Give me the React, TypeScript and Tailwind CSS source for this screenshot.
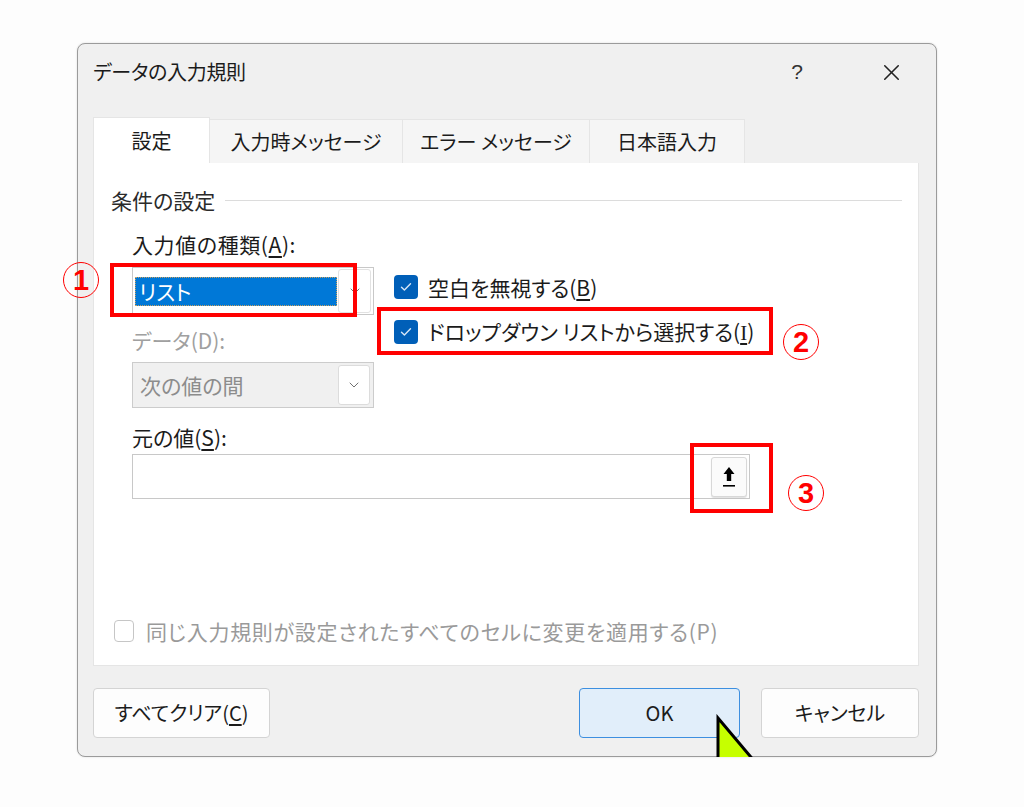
import { ChevronDown, X } from "lucide-react";

const jp = "font-['Noto_Sans_CJK_JP',sans-serif] [font-feature-settings:'palt']";

function CheckedBox() {
  return (
    <span className="flex h-[24px] w-[24px] shrink-0 items-center justify-center rounded-[4px] bg-[#005fb8]">
      <svg width="12" height="10" viewBox="0 0 12 10" fill="none">
        <path d="M1.5 5.2 4.4 8 10.5 1.8" stroke="#d7e6f7" strokeWidth="1.4" strokeLinecap="round" strokeLinejoin="round" />
      </svg>
    </span>
  );
}

function UploadIcon() {
  return (
    <svg width="14" height="22" viewBox="0 0 14 22">
      <path d="M7 1 1.5 8h3.3v7h4.4V8h3.3z" fill="#000" />
      <rect x="1" y="19" width="12" height="1.6" fill="#000" />
    </svg>
  );
}

function Circled({ n, className }: { n: string; className: string }) {
  return (
    <div className={`absolute flex h-[36px] w-[36px] items-center justify-center rounded-full border-[1.5px] border-[#ff0000] ${className}`}>
      <span className="font-['Liberation_Sans',sans-serif] text-[29px] font-bold leading-none text-[#ff0000]">{n}</span>
    </div>
  );
}

export default function App() {
  return (
    <div className={`relative h-[807px] w-[1024px] overflow-hidden bg-[#fdfdfd] pl-[77px] pt-[43px] text-[#1b1b1b] ${jp}`}>
      <div className="flex h-[714px] w-[860px] flex-col rounded-[8px] border border-[#9b9b9b] bg-[#f0f0f0] pl-[15px] pr-[17px] shadow-[0_0_2px_rgba(0,0,0,0.15)]">
        {/* title bar */}
        <div className="flex h-[56px] items-center justify-between">
          <span className="text-[20px] leading-[28px] tracking-[-0.3px]">データの入力規則</span>
          <div className="mr-[5px] flex items-center gap-[48px]">
            <span className="flex w-[46px] justify-center font-['Liberation_Sans',sans-serif] text-[21px] font-light text-[#333]">?</span>
            <span className="flex w-[46px] justify-center">
              <X size={27} strokeWidth={1.4} color="#222" />
            </span>
          </div>
        </div>

        {/* tabs */}
        <div className="mt-[17px] flex h-[46px] items-end text-[20px] leading-[28px]">
          <div className="flex h-[46px] w-[117px] items-center justify-center border border-b-0 border-[#e5e5e5] bg-white">設定</div>
          <div className="flex h-[44px] w-[193px] items-center justify-center border-r border-t border-[#e5e5e5] bg-[#f5f5f5]">入力時メッセージ</div>
          <div className="flex h-[44px] w-[187px] items-center justify-center border-r border-t border-[#e5e5e5] bg-[#f5f5f5]">エラー メッセージ</div>
          <div className="flex h-[44px] w-[155px] items-center justify-center border-r border-t border-[#e5e5e5] bg-[#f5f5f5]">日本語入力</div>
        </div>

        {/* panel */}
        <div className="flex h-[503px] flex-col border border-t-0 border-[#e5e5e5] bg-white text-[21px] leading-[30px]">
          <div className="flex items-center pl-[17px] pr-[16px] pt-[22px]">
            <span className="text-[#2a2a2a]">条件の設定</span>
            <div className="ml-[10px] h-px flex-1 bg-[#dcdcdc]" />
          </div>

          <div className="pl-[38px]">
            <div className="flex">
              <div className="flex w-[242px] flex-col">
                <div className="mt-[14px] tracking-[0.6px]">
                  入力値の種類(<span className="underline underline-offset-[3px]">A</span>):
                </div>
                <div className="mt-[8px] flex h-[48px] items-center border border-[#c8c8c8] pl-[2px] pr-[2px]">
                  <div className="flex h-[29px] flex-1 items-center border border-dotted border-[#c9a060] bg-[#0078d7] pl-[3px] text-white">リスト</div>
                  <div className="ml-[1px] flex h-[44px] w-[33px] items-center justify-center rounded-[3px] border border-[#e2e2e2] bg-white">
                    <ChevronDown size={16} strokeWidth={1.4} color="#666" />
                  </div>
                </div>
                <div className="mt-[10px] text-[#a0a0a0]">データ(D):</div>
                <div className="mt-[7px] flex h-[46px] items-center border border-[#cccccc] bg-[#f0f0f0] pl-[7px] pr-[3px]">
                  <span className="flex-1 text-[#8c8c8c]">次の値の間</span>
                  <div className="flex h-[40px] w-[32px] items-center justify-center rounded-[3px] border border-[#dcdcdc] bg-white">
                    <ChevronDown size={16} strokeWidth={1.4} color="#666" />
                  </div>
                </div>
              </div>

              <div className="ml-[20px] flex flex-col pt-[59px]">
                <label className="flex h-[26px] items-center gap-[10px]">
                  <CheckedBox />
                  <span>
                    空白を無視する(<span className="underline underline-offset-[3px]">B</span>)
                  </span>
                </label>
                <label className="mt-[19px] flex h-[26px] items-center gap-[10px]">
                  <CheckedBox />
                  <span>
                    ドロップダウン リストから選択する(<span className="font-['Liberation_Serif',serif] underline underline-offset-[3px]">I</span>)
                  </span>
                </label>
              </div>
            </div>

            <div className="mt-[14px]">
              元の値(<span className="underline underline-offset-[3px]">S</span>):
            </div>
            <div className="mt-[2px] flex h-[45px] w-[618px] items-center justify-end border border-[#c8c8c8] pr-[2px]">
              <div className="flex h-[40px] w-[36px] items-center justify-center rounded-[3px] border border-[#d8d8d8] bg-[#fbfbfb] shadow-[0_1px_1px_rgba(0,0,0,0.12)]">
                <UploadIcon />
              </div>
            </div>
          </div>

          <label className="mt-auto mb-[21px] flex h-[26px] items-center gap-[12px] pl-[20px] text-[#9a9a9a]">
            <span className="h-[22px] w-[20px] rounded-[4px] border border-[#c6c6c6] bg-white" />
            <span className="tracking-[0.7px]">同じ入力規則が設定されたすべてのセルに変更を適用する(P)</span>
          </label>
        </div>

        {/* buttons */}
        <div className="mt-[22px] flex h-[50px] text-[20px]">
          <button className="flex w-[177px] items-center justify-center rounded-[4px] border border-[#d4d4d4] bg-[#fdfdfd]">
            すべてクリア(<span className="underline underline-offset-[3px]">C</span>)
          </button>
          <button className="ml-auto flex w-[161px] items-center justify-center rounded-[4px] border border-[#3d8fe0] bg-[#e1eefa]">OK</button>
          <button className="ml-[21px] flex w-[158px] items-center justify-center rounded-[4px] border border-[#d4d4d4] bg-[#fdfdfd]">キャンセル</button>
        </div>
      </div>

      {/* annotations */}
      <div className="absolute left-[110px] top-[263px] h-[54px] w-[247px] border-[4px] border-[#ff0000]" />
      <div className="absolute left-[377px] top-[307px] h-[48px] w-[396px] border-[4px] border-[#ff0000]" />
      <div className="absolute left-[690px] top-[443px] h-[70px] w-[83px] border-[4px] border-[#ff0000]" />
      <Circled n="1" className="left-[63px] top-[262px]" />
      <Circled n="2" className="left-[783px] top-[324px]" />
      <Circled n="3" className="left-[788px] top-[475px]" />

      {/* cursor */}
      <svg className="absolute left-[714px] top-[714px]" width="48" height="43" viewBox="0 0 48 43">
        <path d="M4 4V80H68Z" fill="#c6ff00" stroke="#000" strokeWidth="3" strokeLinejoin="miter" />
      </svg>
    </div>
  );
}
